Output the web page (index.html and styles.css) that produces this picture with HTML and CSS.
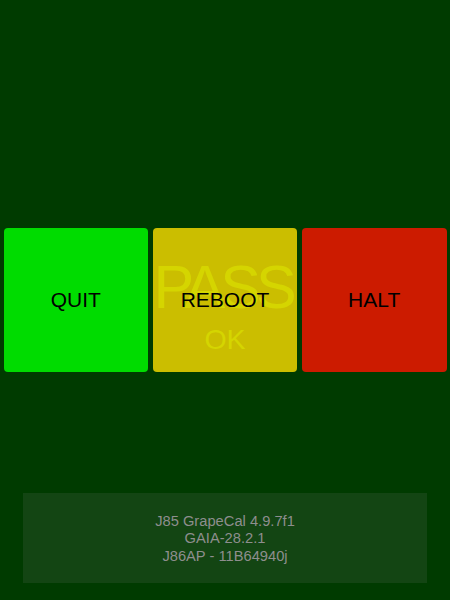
FILE: index.html
```html
<!DOCTYPE html>
<html>
<head>
<meta charset="utf-8">
<link rel="stylesheet" href="styles.css">
</head>
<body>
<div class="screen">
  <div class="buttons">
    <div class="btn btn-quit"><span class="label">QUIT</span></div>
    <div class="btn btn-reboot">
      <span class="status">PASS</span>
      <span class="sub">OK</span>
      <span class="label">REBOOT</span>
    </div>
    <div class="btn btn-halt"><span class="label">HALT</span></div>
  </div>
  <div class="info">
    <div>J85 GrapeCal 4.9.7f1</div>
    <div>GAIA-28.2.1</div>
    <div>J86AP - 11B64940j</div>
  </div>
</div>
</body>
</html>
```
FILE: styles.css
```css
html, body {
  margin: 0;
  padding: 0;
  background: #003b00;
}
.screen {
  width: 450px;
  height: 600px;
  display: flex;
  flex-direction: column;
  align-items: center;
  font-family: "Liberation Sans", Arial, sans-serif;
}
.buttons {
  margin-top: 228px;
  width: 443px;
  display: flex;
  gap: 4.5px;
}
.btn {
  position: relative;
  flex: 1;
  height: 144px;
  border-radius: 4px;
  display: flex;
  align-items: center;
  justify-content: center;
  overflow: hidden;
}
.btn-quit { background: #00dc00; }
.btn-reboot { background: #cbbe00; }
.btn-halt { background: #cc1b00; }
.label {
  position: relative;
  font-size: 21px;
  color: #000;
}
.status {
  position: absolute;
  left: 0;
  right: 0;
  top: 19px;
  text-align: center;
  font-size: 61px;
  letter-spacing: -5px;
  text-indent: -5px;
  color: #d5d500;
  line-height: 80px;
}
.sub {
  position: absolute;
  left: 0;
  right: 0;
  top: 94px;
  text-align: center;
  font-size: 28.5px;
  color: #d5d500;
  line-height: 34px;
}
.info {
  margin-top: 121px;
  width: 404px;
  height: 90px;
  box-sizing: border-box;
  padding-top: 2px;
  background: #134513;
  display: flex;
  flex-direction: column;
  justify-content: center;
  align-items: center;
  color: #8e8e8e;
  font-size: 14.7px;
  line-height: 17.5px;
}
```
